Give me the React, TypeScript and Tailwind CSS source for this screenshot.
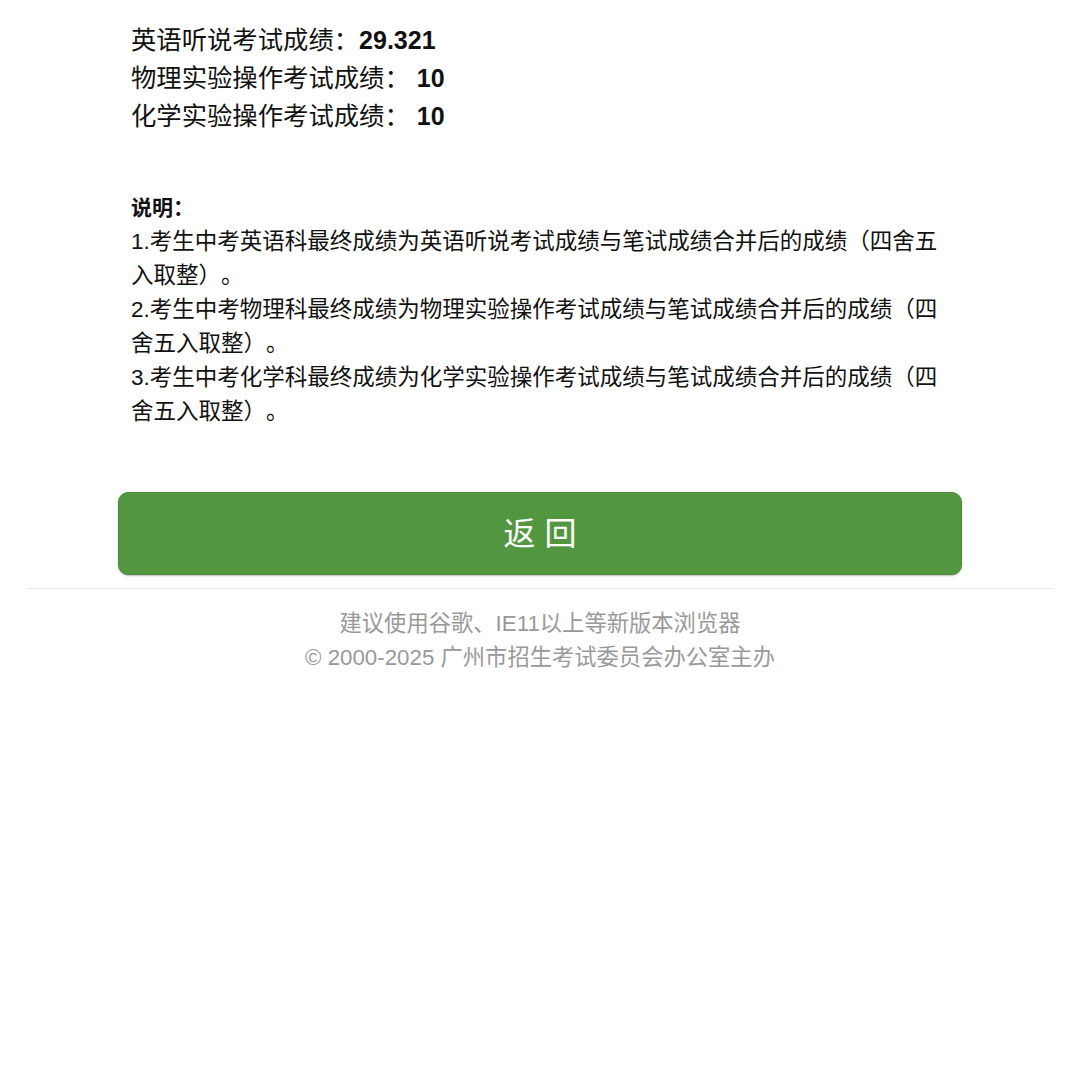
import * as React from "react";

const scores = [
  { label: "英语听说考试成绩：", value: "29.321" },
  { label: "物理实验操作考试成绩： ", value: "10" },
  { label: "化学实验操作考试成绩： ", value: "10" },
];

const notes = [
  "1.考生中考英语科最终成绩为英语听说考试成绩与笔试成绩合并后的成绩（四舍五入取整）。",
  "2.考生中考物理科最终成绩为物理实验操作考试成绩与笔试成绩合并后的成绩（四舍五入取整）。",
  "3.考生中考化学科最终成绩为化学实验操作考试成绩与笔试成绩合并后的成绩（四舍五入取整）。",
];

export default function App() {
  return (
    <div className="min-h-[1091px] bg-white font-['Liberation_Sans','Noto_Sans_CJK_SC',sans-serif] text-[#111] [text-spacing-trim:space-all]">
      <div className="px-[118px]">
        <div className="pl-[13px] pt-[21px] text-[25.35px] leading-[38px]">
          {scores.map((s) => (
            <p key={s.label} className="whitespace-pre">
              {s.label}
              <b className="text-[25px] font-bold">{s.value}</b>
            </p>
          ))}
        </div>

        <div className="mt-[56px] pl-[13px] pr-[13px] text-[22.5px] leading-[34px]">
          <p className="text-[21px] font-bold">说明：</p>
          {notes.map((n) => (
            <p key={n}>{n}</p>
          ))}
        </div>

        <button
          type="button"
          className="mt-[63px] flex h-[83px] w-full items-center justify-center whitespace-pre rounded-[10px] border border-[#4a8a39] bg-[#52973f] text-[32px] text-white shadow-[0_1px_2px_rgba(0,0,0,0.25)]"
        >
          返 回
        </button>
      </div>

      <div className="mx-[27px] mt-[13px] border-t border-[#ececec] pt-[18px] text-center text-[22.3px] leading-[34px] text-[#999]">
        <p>建议使用谷歌、IE11以上等新版本浏览器</p>
        <p>© 2000-2025 广州市招生考试委员会办公室主办</p>
      </div>
    </div>
  );
}
